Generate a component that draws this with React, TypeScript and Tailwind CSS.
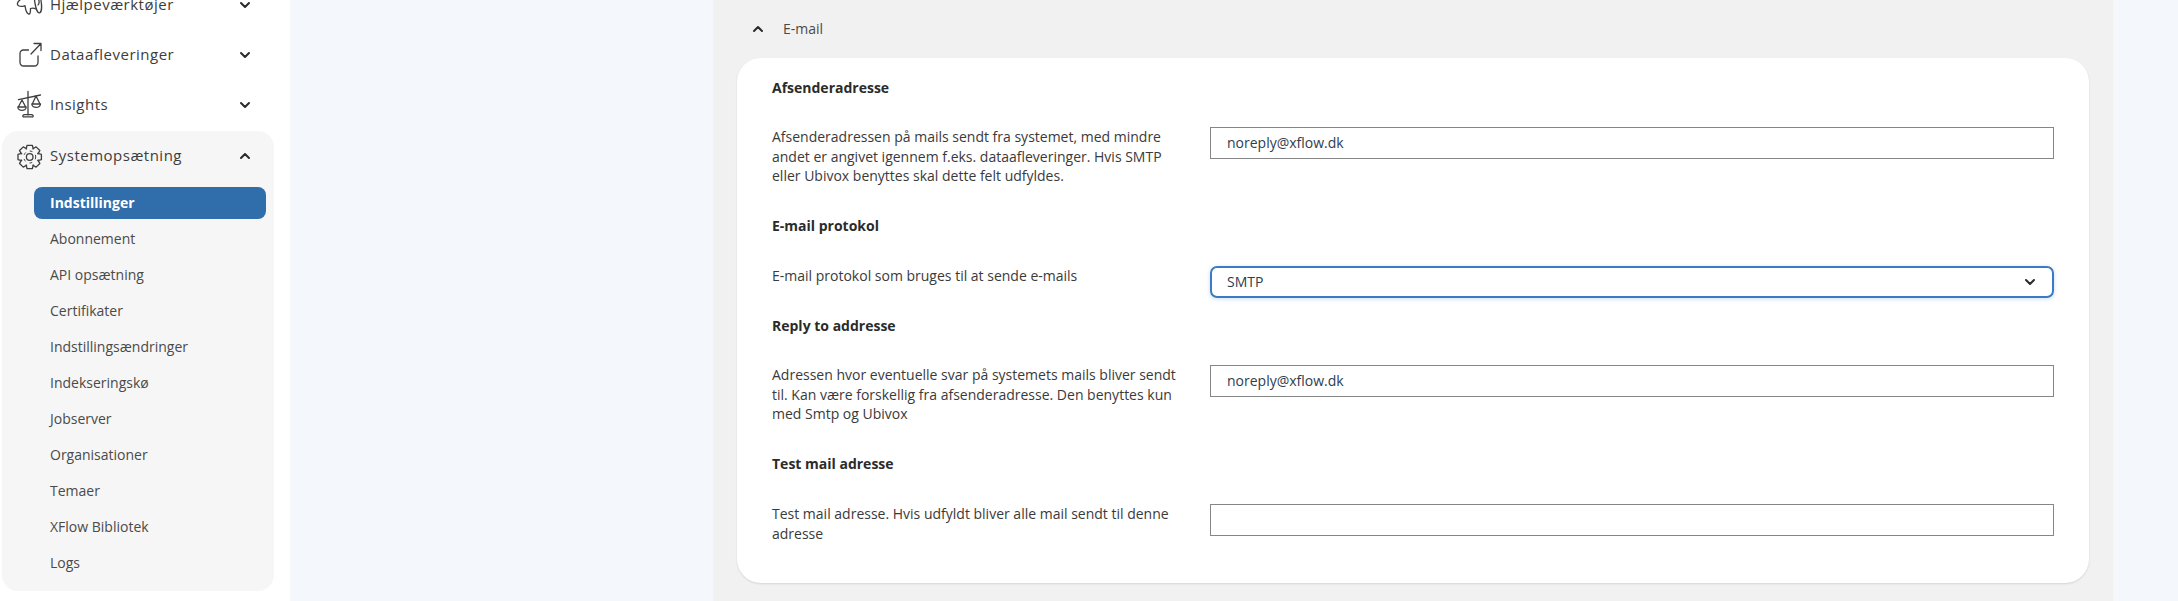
import React from "react";
import { TbChevronDown, TbChevronUp } from "react-icons/tb";

const sub = ["Abonnement", "API opsætning", "Certifikater", "Indstillingsændringer", "Indekseringskø", "Jobserver", "Organisationer", "Temaer", "XFlow Bibliotek", "Logs"];

function Ico({ children }: { children: React.ReactNode }) {
  return (
    <svg width="36" height="36" viewBox="0 0 36 36" fill="none" stroke="#3f3f3f" strokeWidth="1.3" strokeLinecap="round" strokeLinejoin="round" className="shrink-0">
      {children}
    </svg>
  );
}

function gearPath() {
  const cx = 15.7, cy = 19, n = 8, R = 12, r = 8.8;
  const pts: string[] = [];
  for (let i = 0; i < n; i++) {
    const a = (i * 2 * Math.PI) / n - Math.PI / 2;
    const d = [[-0.42, r], [-0.22, R], [0.22, R], [0.42, r]];
    d.forEach(([o, rad]) => pts.push(`${(cx + rad * Math.cos(a + o)).toFixed(2)} ${(cy + rad * Math.sin(a + o)).toFixed(2)}`));
  }
  return "M" + pts.join("L") + "Z";
}

const Megaphone = () => (
  <Ico>
    <path d="M6 13C3 15 2.500 18 5 19C7 19.800 9 19.200 11 18.700C11.500 22 12 26 14.500 27C16.500 27.500 16.500 24 16.500 21.500C18 21 20 21 22 22" />
    <ellipse cx="24" cy="15" rx="3.200" ry="11" transform="rotate(-8 24 15)" />
    <path d="M24 12c1.500 1 1.500 5 0 6" />
  </Ico>
);

const Share = () => (
  <Ico>
    <path d="M14.500 13H9.500a3.500 3.500 0 0 0-3.500 3.500v9a3.500 3.500 0 0 0 3.500 3.500h11a3.500 3.500 0 0 0 3.500-3.500V19" />
    <path d="M17 17 27 6.500M20 6.500h7v7" />
  </Ico>
);

const Scale = () => (
  <Ico>
    <path d="M14 4.500V28M9 29.800h10c.6-1.200-.2-2-1.500-2.200h-7c-1.300.2-2.100 1-1.500 2.200Z" />
    <path d="M4.500 12.700 26.500 8" />
    <path d="M8 13 4.300 20M8 13 11.700 20M3.800 20h8.400a4.200 3.400 0 0 1-8.400 0Z" />
    <path d="M22 9 18.300 17M22 9 26 17M17.800 17h8.700a4.300 3.400 0 0 1-8.700 0Z" />
  </Ico>
);

const Gear = () => (
  <Ico>
    <path d={gearPath()} />
    <circle cx="15.700" cy="19" r="3.300" />
    <circle cx="15.700" cy="19" r="6" strokeDasharray="2 5" strokeWidth="1" />
  </Ico>
);

function Head({ icon, label, open }: { icon: React.ReactNode; label: string; open?: boolean }) {
  return (
    <div className="flex h-[50px] w-[290px] items-center pl-[14px] pr-[37px]">
      {icon}
      <span className="flex-1 pb-[1px] text-[15px] tracking-[0.5px] text-[#3d3d3d]">{label}</span>
      {open ? <TbChevronUp size={16} strokeWidth={3} className="text-[#2b2b2b]" /> : <TbChevronDown size={16} strokeWidth={3} className="text-[#2b2b2b]" />}
    </div>
  );
}

function Row({ title, text, value, select, mt, gap }: { title: string; text: string; value?: string; select?: boolean; mt: string; gap: string }) {
  return (
    <div className={mt}>
      <div className="text-[14px] font-bold leading-[20px] text-[#2b2b2b]">{title}</div>
      <div className={`flex items-start ${gap}`}>
        <div className="w-[438px] shrink-0 pr-[28px]">
          <p className="text-[14px] leading-[19.5px] text-[#3a3a3a]">{text}</p>
        </div>
        {select ? (
          <div className="flex h-[32px] flex-1 items-center justify-between rounded-[7px] border-2 border-[#3a7bc4] pl-[15px] pr-[14px] text-[14px] text-[#2e3d4f] shadow-[0_1px_4px_rgba(59,124,196,0.25)]">
            <span className="pb-[2px]">{value}</span>
            <TbChevronDown size={16} strokeWidth={3} className="text-[#2b2b2b]" />
          </div>
        ) : (
          <div className="flex h-[32px] flex-1 items-center border border-[#868686] pb-[2px] pl-[16px] text-[14px] text-[#2e3d4f]">{value}</div>
        )}
      </div>
    </div>
  );
}

export default function App() {
  return (
    <div className="flex h-[601px] w-[2178px] overflow-hidden bg-[#f4f8fc] font-['Open_Sans','Noto_Sans',sans-serif]">
      <aside className="w-[290px] shrink-0 bg-white">
        <div className="-mt-[20px]">
          <Head icon={<Megaphone />} label="Hjælpeværktøjer" />
          <Head icon={<Share />} label="Dataafleveringer" />
          <Head icon={<Scale />} label="Insights" />
          <div className="ml-[2px] mt-[1px] h-[460px] w-[272px] rounded-[16px] bg-[#f6f6f6]">
            <div className="-ml-[2px]"><Head icon={<Gear />} label="Systemopsætning" open /></div>
            <div className="ml-[32px] mt-[6px] flex h-[32px] w-[232px] items-center rounded-[8px] bg-[#2f6dab] pb-[2px] pl-[16px] text-[14px] font-bold text-white">Indstillinger</div>
            {sub.map((s) => (
              <div key={s} className="mt-[4px] flex h-[32px] items-center pb-[2px] pl-[48px] text-[14px] text-[#4a4a4a]">{s}</div>
            ))}
          </div>
        </div>
      </aside>
      <main className="ml-[423px] h-full w-[1400px] shrink-0 bg-[#f1f1f1]">
        <div className="flex h-[58px] items-center pl-[37px]">
          <TbChevronUp size={16} strokeWidth={3} className="text-[#2b2b2b]" />
          <span className="ml-[17px] pb-[2px] text-[14px] text-[#4a4a4a]">E-mail</span>
        </div>
        <div className="ml-[24px] h-[525px] w-[1352px] rounded-[24px] bg-white pl-[35px] pr-[35px] pt-[20px] shadow-[0_1px_2px_rgba(0,0,0,0.12)]">
          <Row mt="" gap="mt-[29px]" title="Afsenderadresse" value="noreply@xflow.dk" text="Afsenderadressen på mails sendt fra systemet, med mindre andet er angivet igennem f.eks. dataafleveringer. Hvis SMTP eller Ubivox benyttes skal dette felt udfyldes." />
          <Row mt="mt-[30.500px]" gap="mt-[30px]" title="E-mail protokol" select value="SMTP" text="E-mail protokol som bruges til at sende e-mails" />
          <Row mt="mt-[18px]" gap="mt-[29px]" title="Reply to addresse" value="noreply@xflow.dk" text="Adressen hvor eventuelle svar på systemets mails bliver sendt til. Kan være forskellig fra afsenderadresse. Den benyttes kun med Smtp og Ubivox" />
          <Row mt="mt-[30.500px]" gap="mt-[30px]" title="Test mail adresse" text="Test mail adresse. Hvis udfyldt bliver alle mail sendt til denne adresse" />
        </div>
      </main>
    </div>
  );
}
